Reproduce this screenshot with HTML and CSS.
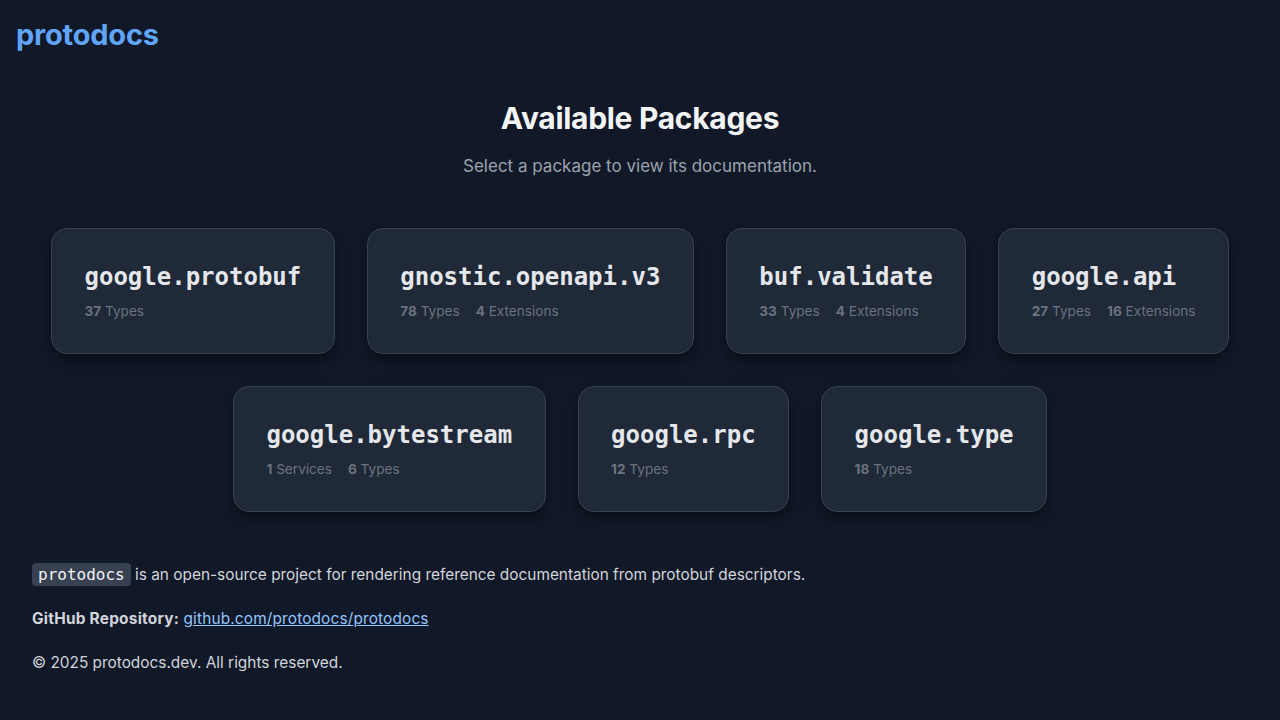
FILE: index.html
```html
<!DOCTYPE html>
<html lang="en">
<head>
<meta charset="utf-8">
<title>protodocs</title>
<link rel="stylesheet" href="styles.css">
</head>
<body>
<header class="topbar">
  <a class="logo" href="#">protodocs</a>
</header>
<main class="main">
  <section class="intro">
    <h1 class="title">Available Packages</h1>
    <p class="subtitle">Select a package to view its documentation.</p>
  </section>
  <section class="packages">
    <a class="card" href="#"><h2 class="card-name">google.protobuf</h2><div class="meta"><span><b>37</b> Types</span></div></a>
    <a class="card" href="#"><h2 class="card-name">gnostic.openapi.v3</h2><div class="meta"><span><b>78</b> Types</span><span><b>4</b> Extensions</span></div></a>
    <a class="card" href="#"><h2 class="card-name">buf.validate</h2><div class="meta"><span><b>33</b> Types</span><span><b>4</b> Extensions</span></div></a>
    <a class="card" href="#"><h2 class="card-name">google.api</h2><div class="meta"><span><b>27</b> Types</span><span><b>16</b> Extensions</span></div></a>
    <a class="card" href="#"><h2 class="card-name">google.bytestream</h2><div class="meta"><span><b>1</b> Services</span><span><b>6</b> Types</span></div></a>
    <a class="card" href="#"><h2 class="card-name">google.rpc</h2><div class="meta"><span><b>12</b> Types</span></div></a>
    <a class="card" href="#"><h2 class="card-name">google.type</h2><div class="meta"><span><b>18</b> Types</span></div></a>
  </section>
  <footer class="footer">
    <p><code class="code">protodocs</code> is an open-source project for rendering reference documentation from protobuf descriptors.</p>
    <p><strong>GitHub Repository:</strong> <a class="link" href="#">github.com/protodocs/protodocs</a></p>
    <p>© 2025 protodocs.dev. All rights reserved.</p>
  </footer>
</main>
</body>
</html>
```
FILE: styles.css
```css
* { box-sizing: border-box; }
html, body { margin: 0; padding: 0; }
body {
  background: #111827;
  color: #d1d5db;
  font-family: Inter, "Noto Sans", "Liberation Sans", sans-serif;
  font-size: 16px;
  line-height: 24px;
}
.topbar {
  padding: 16px 16px;
  height: 70px;
}
.logo {
  color: #60a5fa;
  font-weight: 700;
  font-size: 29px;
  line-height: 38px;
  text-decoration: none;
  letter-spacing: -0.2px;
}
.main {
  padding: 0 32px;
}
.intro {
  text-align: center;
  padding-top: 30px;
}
.title {
  margin: 0;
  color: #f3f4f6;
  font-size: 30px;
  line-height: 36px;
  font-weight: 700;
  letter-spacing: -0.3px;
}
.subtitle {
  margin: 16px 0 0;
  color: #9ca3af;
  font-size: 17px;
  line-height: 28px;
}
.packages {
  display: flex;
  flex-wrap: wrap;
  justify-content: center;
  gap: 32px;
  margin-top: 48px;
}
.card {
  display: block;
  background: #1f2937;
  border: 1px solid #374151;
  border-radius: 16px;
  padding: 32px 32.5px;
  text-decoration: none;
  box-shadow: 0 10px 20px -4px rgba(0, 0, 0, 0.35), 0 4px 8px -2px rgba(0, 0, 0, 0.2);
}
.card-name {
  margin: 0 0 8px;
  color: #e5e7eb;
  font-family: "DejaVu Sans Mono", "Liberation Mono", monospace;
  font-weight: 700;
  font-size: 24px;
  line-height: 32px;
}
.meta {
  display: flex;
  gap: 16px;
  color: #6b7280;
  font-size: 13.6px;
  line-height: 20px;
}
.meta b { font-weight: 700; }
.footer {
  margin-top: 51px;
  padding-bottom: 20px;
}
.footer p {
  margin: 0 0 20px;
  font-size: 15.4px;
  line-height: 24px;
  color: #d1d5db;
}
.footer strong { color: #d1d5db; font-weight: 700; letter-spacing: 0.25px; }
.code {
  font-family: "DejaVu Sans Mono", "Liberation Mono", monospace;
  font-size: 16px;
  background: #374151;
  color: #f3f4f6;
  padding: 2px 6px;
  border-radius: 4px;
}
.link {
  color: #93c5fd;
  text-decoration: underline;
  letter-spacing: 0.15px;
}
```
